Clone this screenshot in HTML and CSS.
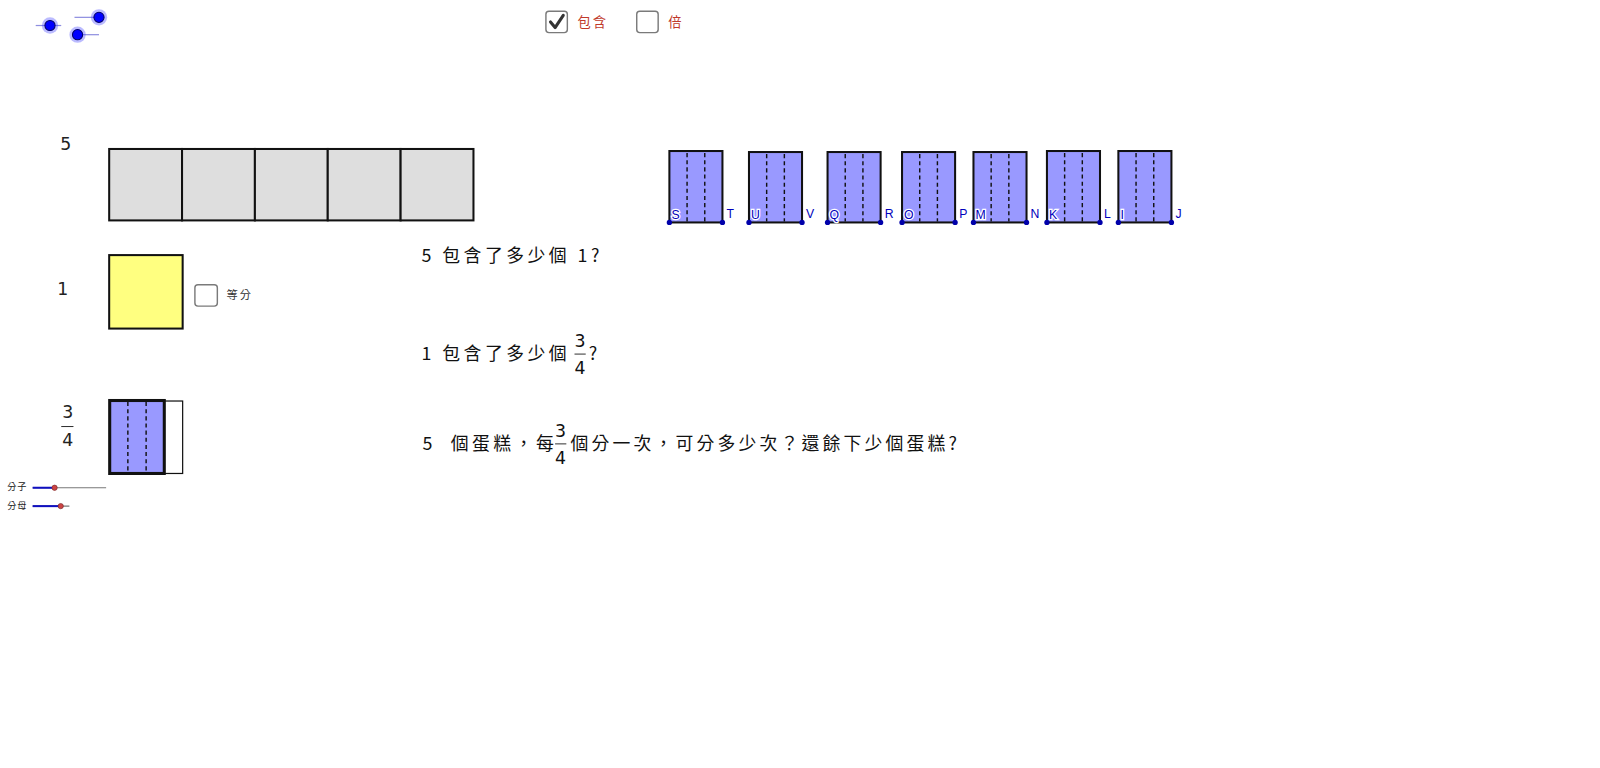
FILE: index.html
```html
<!DOCTYPE html>
<html lang="zh-Hant">
<head>
<meta charset="utf-8">
<title>包含除</title>
<link rel="stylesheet" href="styles.css">
</head>
<body>
<div class="canvas">
<svg class="board" width="1600" height="768" viewBox="0 0 1568 752.64" xmlns="http://www.w3.org/2000/svg">
  <!-- top-left slider handles -->
  <g class="handles">
    <line class="hline" x1="35" y1="25" x2="60" y2="25"/>
    <line class="hline" x1="73" y1="17" x2="96" y2="17"/>
    <line class="hline" x1="75" y1="34" x2="97" y2="34"/>
    <circle class="halo" cx="49" cy="25" r="8"/>
    <circle class="dot" cx="49" cy="25" r="5"/>
    <circle class="halo" cx="97" cy="17" r="8"/>
    <circle class="dot" cx="97" cy="17" r="5"/>
    <circle class="halo" cx="76" cy="34" r="8"/>
    <circle class="dot" cx="76" cy="34" r="5"/>
  </g>

  <!-- checkboxes top -->
  <rect class="cb" x="535" y="11" width="21" height="21" rx="3"/>
  <path class="check" d="M539.5 21.5 L544 27 L552 15"/>
  <text class="red" x="566" y="26">包含</text>
  <rect class="cb" x="624" y="11" width="21" height="21" rx="3"/>
  <text class="red" x="655" y="26">倍</text>

  <!-- label 5 and gray boxes -->
  <text class="num" x="59" y="147">5</text>
  <g class="gray">
    <rect x="107" y="146" width="71.4" height="70"/>
    <rect x="178.4" y="146" width="71.4" height="70"/>
    <rect x="249.8" y="146" width="71.4" height="70"/>
    <rect x="321.2" y="146" width="71.4" height="70"/>
    <rect x="392.6" y="146" width="71.4" height="70"/>
  </g>

  <!-- blue rectangles -->
  <g id="blues"></g>

  <!-- 1 and yellow -->
  <text class="num" x="56" y="289">1</text>
  <rect class="yellow" x="107" y="250" width="72" height="72"/>
  <rect class="cb" x="191" y="279" width="22" height="21" rx="3"/>
  <text class="small" x="222" y="293">等分</text>

  <!-- 3/4 -->
  <text class="num" x="61" y="410">3</text>
  <line class="fracline" x1="60" y1="418" x2="72" y2="418"/>
  <text class="num" x="61" y="437">4</text>
  <rect class="white" x="161" y="393" width="18" height="71"/>
  <rect class="blue thick" x="107.5" y="392.5" width="53.5" height="71.5"/>
  <line class="dash" x1="125.3" y1="394" x2="125.3" y2="463"/>
  <line class="dash" x1="143.2" y1="394" x2="143.2" y2="463"/>

  <!-- sliders -->
  <text class="tiny" x="7" y="480">分子</text>
  <line class="track" x1="32" y1="478" x2="104" y2="478"/>
  <line class="trackfill" x1="32" y1="478" x2="53" y2="478"/>
  <circle class="knob" cx="53.5" cy="478" r="2.6"/>
  <text class="tiny" x="7" y="499">分母</text>
  <line class="track" x1="32" y1="496" x2="68" y2="496"/>
  <line class="trackfill" x1="32" y1="496" x2="59" y2="496"/>
  <circle class="knob" cx="59.5" cy="496" r="2.6"/>

  <!-- questions -->
  <text class="q" x="413" y="257">5 包含了多少個 1?</text>
  <text class="q" x="413" y="353">1 包含了多少個</text>
  <text class="fr" x="563" y="340">3</text>
  <line class="fracline" x1="563" y1="347" x2="574" y2="347"/>
  <text class="fr" x="563" y="367">4</text>
  <text class="q" x="577" y="353">?</text>

  <text class="q" x="414" y="441">5  個蛋糕，每</text>
  <text class="fr" x="544" y="428">3</text>
  <line class="fracline" x1="544" y1="435" x2="555" y2="435"/>
  <text class="fr" x="544" y="455">4</text>
  <text class="q tight" x="559" y="441">個分一次，可分多少次？還餘下少個蛋糕?</text>
</svg>
</div>
<script src="app.js"></script>
</body>
</html>
```
FILE: styles.css
```css
html, body { margin: 0; padding: 0; background: #fff; }
.canvas { position: relative; width: 1600px; height: 768px; overflow: hidden; }
.board { display: block; }
.hline { stroke: #8f8fe0; stroke-width: 1.2; }
.halo { fill: rgba(60, 60, 255, 0.35); }
.dot { fill: #0000ff; stroke: #000066; stroke-width: 1; }
.cb { fill: #fff; stroke: #7a7a7a; stroke-width: 1.4; }
.check { fill: none; stroke: #333; stroke-width: 3; stroke-linecap: round; stroke-linejoin: round; }
.red { fill: #c0392b; font: 13px "Noto Sans CJK TC", sans-serif; letter-spacing: 2px; }
.num { fill: #222; font: 17px "DejaVu Sans", sans-serif; }
.gray rect { fill: #dedede; stroke: #111; stroke-width: 2; }
.yellow { fill: #ffff80; stroke: #111; stroke-width: 2; }
.white { fill: #fff; stroke: #111; stroke-width: 1.2; }
.blue { fill: #9999ff; stroke: #111; stroke-width: 2; }
.thick { stroke-width: 3; }
.dash { stroke: #111; stroke-width: 1.4; stroke-dasharray: 4 3; }
.pt { fill: #0000aa; }
.lbl { fill: #0000bb; font: 12px "Liberation Sans", Arial, sans-serif; }
.lbl.in { stroke: #fff; stroke-width: 2.5; paint-order: stroke; }
.small { fill: #333; font: 11px "Noto Sans CJK TC", sans-serif; letter-spacing: 2px; }
.tiny { fill: #222; font: 9px "Noto Sans CJK TC", sans-serif; letter-spacing: 1px; }
.track { stroke: #777; stroke-width: 1; }
.trackfill { stroke: #1010c0; stroke-width: 2; }
.knob { fill: #cc4444; stroke: #772222; stroke-width: 0.6; }
.q { fill: #111; font: 17.5px "Noto Sans CJK TC", sans-serif; letter-spacing: 3.4px; white-space: pre; }
.q.tight { letter-spacing: 3.1px; }
.fr { fill: #111; font: 17px "DejaVu Sans", sans-serif; }
.fracline { stroke: #333; stroke-width: 1; }
```
FILE: app.js
```js
(function () {
  var ns = 'http://www.w3.org/2000/svg';
  var g = document.getElementById('blues');
  var data = [
    [656, 148, 'S', 'T'], [734, 149, 'U', 'V'], [811, 149, 'Q', 'R'],
    [884, 149, 'O', 'P'], [954, 149, 'M', 'N'], [1026, 148, 'K', 'L'],
    [1096, 148, 'I', 'J']
  ];
  function el(name, attrs, cls) {
    var e = document.createElementNS(ns, name);
    for (var k in attrs) e.setAttribute(k, attrs[k]);
    if (cls) e.setAttribute('class', cls);
    g.appendChild(e);
    return e;
  }
  data.forEach(function (d) {
    var x = d[0], y = d[1], w = 52, b = 218;
    el('rect', { x: x, y: y, width: w, height: b - y }, 'blue');
    el('line', { x1: x + w / 3, y1: y + 2, x2: x + w / 3, y2: b - 1 }, 'dash');
    el('line', { x1: x + 2 * w / 3, y1: y + 2, x2: x + 2 * w / 3, y2: b - 1 }, 'dash');
    el('circle', { cx: x, cy: b, r: 2.6 }, 'pt');
    el('circle', { cx: x + w, cy: b, r: 2.6 }, 'pt');
    el('text', { x: x + 2, y: 215 }, 'lbl in').textContent = d[2];
    el('text', { x: x + w + 4, y: 214 }, 'lbl').textContent = d[3];
  });
})();
```
